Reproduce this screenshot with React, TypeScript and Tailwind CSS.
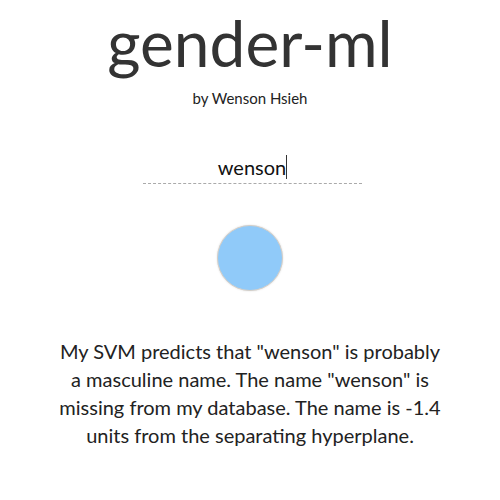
export default function App() {
  return (
    <div
      className="w-[500px] h-[500px] bg-white flex flex-col items-center text-[#222]"
      style={{ fontFamily: "Lato, 'Open Sans', sans-serif" }}
    >
      <h1 className="mt-[3px] text-[64px] leading-[80px] text-[#333] font-normal">gender-ml</h1>
      <p className="mt-[5px] text-[15px] leading-[20px] text-[#222]">by Wenson Hsieh</p>

      <div className="mt-[46px] ml-[5px] w-[219px] border-b border-dashed border-[#aaa] flex justify-center pb-[3px]">
        <span className="text-[20px] leading-[26px] text-[#111]">wenson</span>
        <span className="w-px h-[24px] bg-[#333] mt-[1px]" />
      </div>

      <div className="mt-[41px] w-[66px] h-[66px] rounded-full bg-[#90caf9] border border-[#d6cfc7] shadow-[0_0_2px_rgba(0,0,0,0.15)]" />

      <p className="mt-[46px] w-[392px] text-center text-[20px] leading-[28px] text-[#222]">
        My SVM predicts that "wenson" is probably a masculine name. The name "wenson" is missing from my database. The name is -1.4 units from the separating hyperplane.
      </p>
    </div>
  );
}
